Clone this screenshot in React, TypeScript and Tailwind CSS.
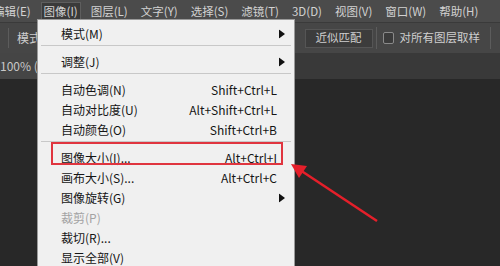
const font = { fontFamily: '"Noto Sans CJK SC", "Noto Sans", sans-serif' };

const menuBar = ['编辑(E)', '图像(I)', '图层(L)', '文字(Y)', '选择(S)', '滤镜(T)', '3D(D)', '视图(V)', '窗口(W)', '帮助(H)'];

type Item =
  | { sep: true }
  | { label: string; shortcut?: string; sub?: boolean; disabled?: boolean; boxed?: boolean };

const items: Item[] = [
  { label: '模式(M)', sub: true },
  { sep: true },
  { label: '调整(J)', sub: true },
  { sep: true },
  { label: '自动色调(N)', shortcut: 'Shift+Ctrl+L' },
  { label: '自动对比度(U)', shortcut: 'Alt+Shift+Ctrl+L' },
  { label: '自动颜色(O)', shortcut: 'Shift+Ctrl+B' },
  { sep: true },
  { label: '图像大小(I)...', shortcut: 'Alt+Ctrl+I', boxed: true },
  { label: '画布大小(S)...', shortcut: 'Alt+Ctrl+C' },
  { label: '图像旋转(G)', sub: true },
  { label: '裁剪(P)', disabled: true },
  { label: '裁切(R)...' },
  { label: '显示全部(V)' },
];

function SubArrow() {
  return (
    <svg width="6" height="9" viewBox="0 0 6 9" className="absolute right-[9px] top-1/2 -translate-y-1/2">
      <path d="M0 0 L6 4.5 L0 9 Z" fill="#111" />
    </svg>
  );
}

export default function App() {
  return (
    <div className="relative w-[500px] h-[266px] overflow-hidden bg-[#282828] flex flex-col" style={font}>
      {/* menu bar */}
      <div className="h-[22px] bg-[#4b4b4b] flex items-center gap-[9px] text-[11.5px] text-[#d2d2d2] shrink-0">
        {menuBar.map((m, i) => (
          <span
            key={m}
            className={`leading-[17px] px-[2px] ${i === 0 ? '-ml-[9px]' : ''} ${i === 1 ? 'bg-[#3a3a3a] outline outline-1 outline-[#5e5e5e]' : ''}`}
          >
            {m}
          </span>
        ))}
      </div>

      {/* options bar */}
      <div className="h-[31px] bg-[#464646] border-t border-[#3a3a3a] flex items-center text-[12px] text-[#cfcfcf] shrink-0">
        <div className="w-px h-[20px] bg-[#5c5c5c] ml-[8px]" />
        <span className="ml-[8px]">模式</span>
        <div className="ml-auto flex items-center">
          <div className="w-[68px] h-[19px] flex items-center justify-center bg-[#3c3c3c] border border-[#555555] text-[11.5px]">近似匹配</div>
          <div className="w-px h-[22px] bg-[#5c5c5c] ml-[3px]" />
          <div className="w-[11px] h-[12px] border border-[#8a8a8a] rounded-[2px] bg-[#3b3b3b] ml-[6px]" />
          <span className="ml-[6px] text-[11.5px]">对所有图层取样</span>
          <div className="w-px h-[22px] bg-[#5c5c5c] ml-[10px] mr-[9px]" />
        </div>
      </div>

      {/* document tab row */}
      <div className="h-[26px] bg-[#393939] flex items-end shrink-0">
        <div className="h-[26px] w-[60px] bg-[#454545] flex items-center text-[12px] text-[#c8c8c8]">100% (</div>
      </div>

      <div className="flex-1 bg-[#282828]" />

      {/* dropdown menu */}
      <div className="absolute left-[37px] top-[19px] w-[258px] h-[260px] bg-[#f0f0f0] border-l border-r border-t border-[#9a9a9a] pt-[4px] text-[12px]">
        {items.map((it, i) =>
          'sep' in it ? (
            <div key={i} className="h-[8px] pt-[1px] pl-[3px] pr-[3px]">
              <div className="h-px bg-[#c8c8c8]" />
            </div>
          ) : (
            <div
              key={i}
              className={`relative h-[20px] flex items-center pl-[23px] pr-[17px] ${it.disabled ? 'text-[#a3a3a3]' : 'text-[#151515]'}`}
            >
              <span>{it.label}</span>
              {it.shortcut && <span className="ml-auto">{it.shortcut}</span>}
              {it.sub && <SubArrow />}
              {it.boxed && (
                <div className="absolute left-[13px] right-[11px] -top-[6px] h-[23px] border-2 border-[#e0353f]" />
              )}
            </div>
          )
        )}
      </div>

      {/* red arrow */}
      <svg className="absolute left-0 top-0" width="500" height="266" viewBox="0 0 500 266">
        <line x1="377" y1="221" x2="300" y2="170" stroke="#e51f2a" strokeWidth="2.5" />
        <path d="M291 164 L307 166 L299 178 Z" fill="#e51f2a" />
      </svg>
    </div>
  );
}
